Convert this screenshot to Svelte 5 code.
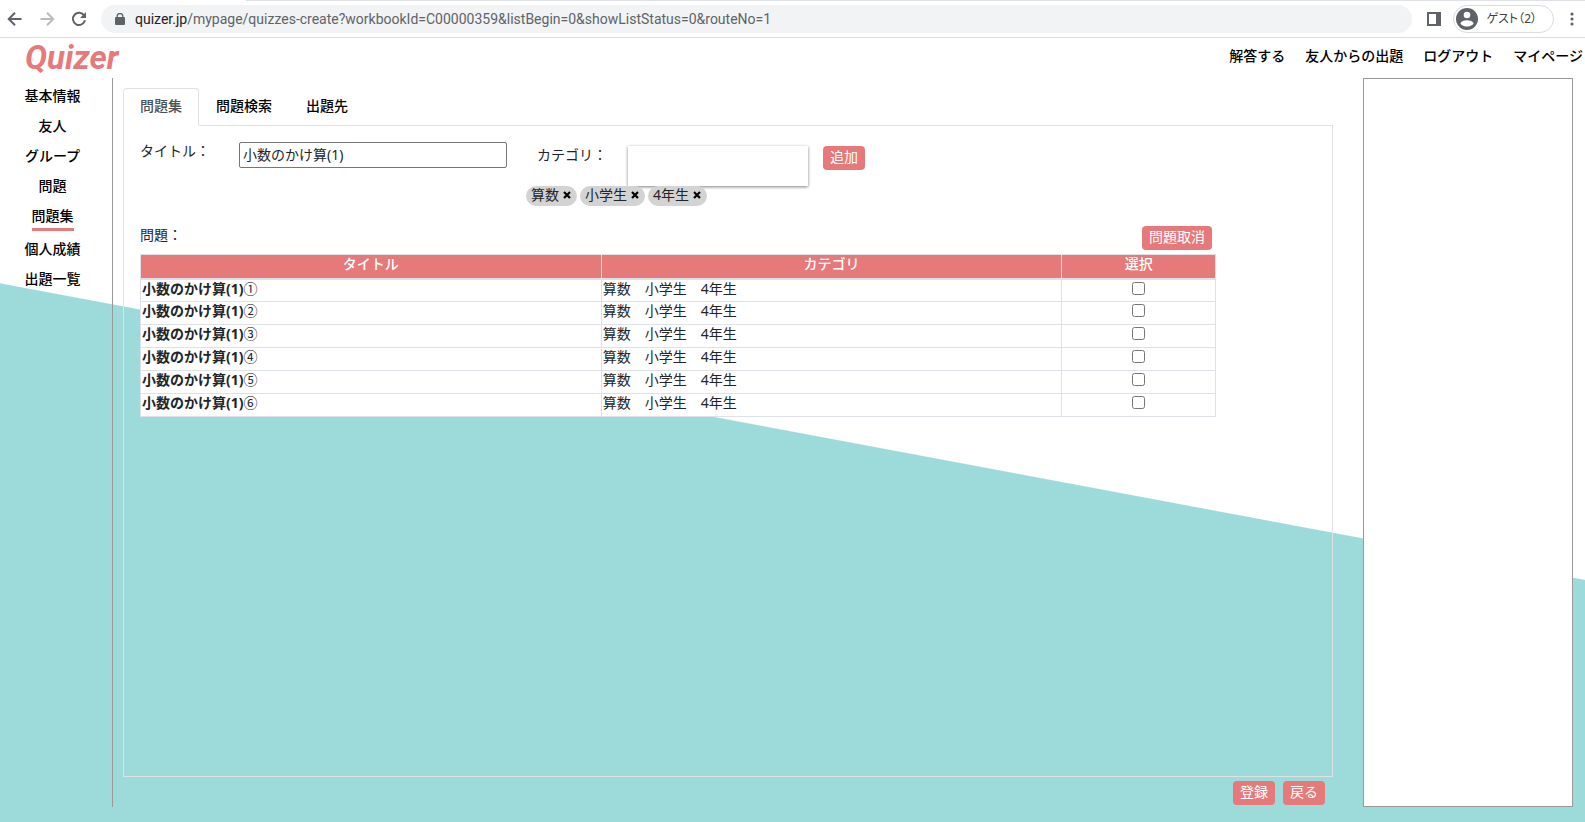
<script>
	const globalNav = ['解答する', '友人からの出題', 'ログアウト', 'マイページ'];
	const sideNav = ['基本情報', '友人', 'グループ', '問題', '問題集', '個人成績', '出題一覧'];
	const tabs = ['問題集', '問題検索', '出題先'];

	let activeTab = '問題集';
	let title = '小数のかけ算(1)';
	let newCategory = '';
	let categories = ['算数', '小学生', '4年生'];
	let questions = ['①', '②', '③', '④', '⑤', '⑥'].map((mark) => ({
		mark,
		name: '小数のかけ算(1)',
		categories: '算数　小学生　4年生',
		checked: false
	}));

	const addCategory = () => {
		if (newCategory && !categories.includes(newCategory)) {
			categories = [...categories, newCategory];
		}
		newCategory = '';
	};

	const removeCategory = (category) => {
		categories = categories.filter((c) => c !== category);
	};

	const removeChecked = () => {
		questions = questions.filter((q) => !q.checked);
	};
</script>

<svelte:head>
	<title>Quizer</title>
</svelte:head>

<div class="window">
	<div class="toolbar">
		<button class="tool" aria-label="戻る">
			<svg width="16" height="16" viewBox="0 0 16 16">
				<path d="M14.5 8H2M8 1.7L1.7 8L8 14.3" fill="none" stroke="#5f6368" stroke-width="2" />
			</svg>
		</button>
		<button class="tool" aria-label="進む">
			<svg width="16" height="16" viewBox="0 0 16 16">
				<path d="M1.5 8H14M8 1.7L14.3 8L8 14.3" fill="none" stroke="#babcbe" stroke-width="2" />
			</svg>
		</button>
		<button class="tool reload" aria-label="再読み込み">
			<svg width="16" height="16" viewBox="0 0 16 16">
				<path d="M13.2 4.6A6.1 6.1 0 1 0 14 9.2" fill="none" stroke="#5f6368" stroke-width="2" />
				<path d="M15 1V7H9Z" fill="#5f6368" />
			</svg>
		</button>
		<div class="address">
			<svg width="10" height="12" viewBox="0 0 10 12">
				<path d="M1 4H9Q10 4 10 5V11Q10 12 9 12H1Q0 12 0 11V5Q0 4 1 4Z" fill="#5f6368" />
				<path d="M2.2 5V3.2A2.8 2.6 0 0 1 7.8 3.2V5" fill="none" stroke="#5f6368" stroke-width="1.3" />
			</svg>
			<span class="url"><b>quizer.jp</b>/mypage/quizzes-create?workbookId=C00000359&amp;listBegin=0&amp;showListStatus=0&amp;routeNo=1</span>
		</div>
		<button class="tool panel-button" aria-label="サイドパネル">
			<svg width="14" height="14" viewBox="0 0 14 14">
				<path d="M0 0H14V14H0ZM2 2V12H9V2Z" fill="#5f6368" fill-rule="evenodd" />
			</svg>
		</button>
		<button class="profile">
			<svg width="22" height="22" viewBox="0 0 22 22">
				<circle cx="11" cy="11" r="11" fill="#5f6368" />
				<circle cx="11" cy="7" r="3.3" fill="#fff" />
				<path d="M4.4 15.4C5.6 11.2 16.4 11.2 17.6 15.4C14.6 19.6 7.4 19.6 4.4 15.4Z" fill="#fff" />
			</svg>
			ゲスト（2）
		</button>
		<button class="tool" aria-label="メニュー">
			<svg width="4" height="14" viewBox="0 0 4 14" fill="#5f6368">
				<circle cx="2" cy="2" r="1.6" />
				<circle cx="2" cy="7" r="1.6" />
				<circle cx="2" cy="12" r="1.6" />
			</svg>
		</button>
	</div>

	<div class="page">
		<header>
			<a class="logo" href="/">Quizer</a>
			<nav>
				{#each globalNav as item}
					<a href="/">{item}</a>
				{/each}
			</nav>
		</header>

		<div class="columns">
			<nav class="side">
				{#each sideNav as item}
					<a href="/mypage" class:current={item === '問題集'}>{item}</a>
				{/each}
			</nav>

			<main>
				<div class="tabs" role="tablist">
					{#each tabs as tab}
						<button
							role="tab"
							aria-selected={tab === activeTab}
							class:active={tab === activeTab}
							on:click={() => (activeTab = tab)}>{tab}</button
						>
					{/each}
				</div>

				<div class="panel">
					<div class="fields">
						<label class="title-label" for="title">タイトル：</label>
						<input id="title" class="title-input" type="text" bind:value={title} />
						<div class="category">
							<div class="category-field">
								<label for="category">カテゴリ：</label>
								<input id="category" type="text" bind:value={newCategory} />
								<button class="btn" on:click={addCategory}>追加</button>
							</div>
							<div class="tags">
								{#each categories as category}
									<span class="tag">
										{category}
										<button aria-label="{category}を削除" on:click={() => removeCategory(category)}>
											<svg width="8" height="8" viewBox="0 0 8 8">
												<path d="M1 1L7 7M7 1L1 7" stroke="#000" stroke-width="2.2" />
											</svg>
										</button>
									</span>
								{/each}
							</div>
						</div>
					</div>

					<div class="list">
						<div class="list-head">
							<span>問題：</span>
							<button class="btn" on:click={removeChecked}>問題取消</button>
						</div>
						<table>
							<thead>
								<tr>
									<th>タイトル</th>
									<th>カテゴリ</th>
									<th class="select">選択</th>
								</tr>
							</thead>
							<tbody>
								{#each questions as question}
									<tr>
										<td><b>{question.name}</b>{question.mark}</td>
										<td>{question.categories}</td>
										<td class="select">
											<input
												type="checkbox"
												aria-label="{question.name}{question.mark}"
												bind:checked={question.checked}
											/>
										</td>
									</tr>
								{/each}
							</tbody>
						</table>
					</div>
				</div>

				<div class="actions">
					<button class="btn">登録</button>
					<button class="btn">戻る</button>
				</div>
			</main>

			<aside></aside>
		</div>
	</div>
</div>

<style>
	:global(body) {
		margin: 0;
	}
	.window {
		display: flex;
		flex-direction: column;
		min-height: 100vh;
		font-family: 'Noto Sans', 'Noto Sans CJK JP', sans-serif;
		font-size: 14px;
		line-height: 18px;
		color: #212529;
	}
	.window * {
		box-sizing: border-box;
	}
	button,
	input {
		font: inherit;
		color: inherit;
	}
	button {
		cursor: pointer;
	}
	a {
		color: #000;
		font-weight: 500;
		text-decoration: none;
	}

	/* browser toolbar, with the edge of the tab strip along its top */
	.toolbar {
		display: flex;
		align-items: center;
		height: 38px;
		padding: 0 11px 0 7px;
		background: linear-gradient(#dee1e6, #dee1e6) 246px 0 / 100% 1px no-repeat #fff;
		border-bottom: 1px solid #dadce0;
	}
	.tool {
		display: flex;
		padding: 0;
		margin-right: 16px;
		background: none;
		border: 0;
	}
	.tool:last-child {
		margin-right: 0;
	}
	.tool.reload {
		margin-right: 14px;
	}
	.address {
		display: flex;
		flex: 1;
		align-items: center;
		gap: 10px;
		height: 28px;
		padding: 0 14px;
		margin-right: 15px;
		background: #f1f3f4;
		border-radius: 14px;
	}
	.url {
		font-family: Roboto, sans-serif;
		color: #5f6368;
		white-space: nowrap;
	}
	.url b {
		font-weight: 400;
		color: #202124;
	}
	.tool.panel-button {
		margin-right: 12px;
	}
	.profile {
		display: flex;
		align-items: center;
		gap: 8px;
		height: 28px;
		padding: 0 16px 0 2px;
		margin-right: 16px;
		font-size: 12px;
		font-feature-settings: 'palt';
		color: #3c4043;
		background: #fff;
		border: 1px solid #dadce0;
		border-radius: 14px;
	}

	/* page */
	.page {
		display: flex;
		flex: 1;
		flex-direction: column;
		padding-bottom: 15px;
		background: linear-gradient(190.6deg, #fff 50.1%, #9ddbdb 50.2%);
	}
	header {
		display: flex;
		align-items: center;
		justify-content: space-between;
		height: 40px;
		padding: 0 2px 0 25px;
	}
	header nav {
		display: flex;
		gap: 20px;
		padding-bottom: 4px;
	}
	.logo {
		font-family: Roboto, sans-serif;
		font-size: 33px;
		font-style: italic;
		font-weight: 700;
		color: #e67a7a;
	}
	.columns {
		display: flex;
		flex: 1;
	}
	.side {
		display: flex;
		flex-direction: column;
		align-items: center;
		gap: 9px;
		width: 113px;
		padding: 9px 7px 0 0;
		border-right: 1px solid #999;
	}
	.side a {
		padding-bottom: 3px;
	}
	.side .current {
		border-bottom: 3px solid #e67a7a;
	}
	aside {
		width: 210px;
		margin-right: 12px;
		background: #fff;
		border: 1px solid #999;
	}

	main {
		display: flex;
		flex: 1;
		flex-direction: column;
		padding: 10px 30px 2px 10px;
	}
	.tabs {
		display: flex;
		border-bottom: 1px solid #dee2e6;
	}
	.tabs button {
		padding: 8px 16px 10px;
		margin-bottom: -1px;
		font-weight: 500;
		color: #000;
		background: none;
		border: 1px solid transparent;
		border-radius: 4px 4px 0 0;
	}
	.tabs button.active {
		color: #495057;
		background: #fff;
		border-color: #dee2e6 #dee2e6 #fff;
	}
	.panel {
		flex: 1;
		padding: 16px;
		border: 1px solid #dee2e6;
		border-top: 0;
	}
	.fields {
		display: flex;
		align-items: flex-start;
	}
	.title-label {
		width: 99px;
	}
	.title-input {
		width: 268px;
		height: 26px;
		padding: 0 3px 2px;
		background: #fff;
		border: 1px solid #767676;
		border-radius: 2px;
	}
	.category {
		padding-top: 4px;
		margin-left: 19px;
	}
	.category-field {
		display: flex;
		align-items: flex-start;
		padding-left: 11px;
	}
	.category-field label {
		width: 91px;
	}
	.category-field input {
		width: 180px;
		height: 40px;
		margin-right: 15px;
		padding: 0 8px;
		background: #fff;
		border: 0;
		box-shadow: 0 1px 3px rgba(0, 0, 0, 0.5);
	}
	.tags {
		display: flex;
		gap: 3px;
	}
	.tag {
		display: flex;
		align-items: center;
		gap: 4px;
		height: 20px;
		padding: 0 6px 2px 5px;
		background: #d3d3d3;
		border-radius: 10px;
	}
	.tag button {
		display: flex;
		padding: 0;
		background: none;
		border: 0;
	}
	.btn {
		height: 24px;
		padding: 0 7px 3px;
		color: #fff;
		background: #e67a7a;
		border: 0;
		border-radius: 4px;
	}

	.list {
		width: 91.5%;
		margin-top: 20px;
	}
	.list-head {
		display: flex;
		justify-content: space-between;
		padding: 0 4px 4px 0;
	}
	table {
		width: 100%;
		table-layout: fixed;
		border-collapse: collapse;
		background: #fff;
	}
	th,
	td {
		height: 23px;
		padding: 0 1px;
		vertical-align: top;
		border: 1px solid #dee2e6;
	}
	th {
		height: 24px;
		font-weight: 500;
		color: #fff;
		background: #e67a7a;
		border-bottom-width: 2px;
	}
	.select {
		width: 14.3%;
		text-align: center;
	}
	td input {
		display: block;
		width: 13px;
		height: 13px;
		margin: 2px auto 0;
	}
	.actions {
		display: flex;
		justify-content: flex-end;
		gap: 8px;
		padding: 4px 8px 0 0;
	}
</style>
